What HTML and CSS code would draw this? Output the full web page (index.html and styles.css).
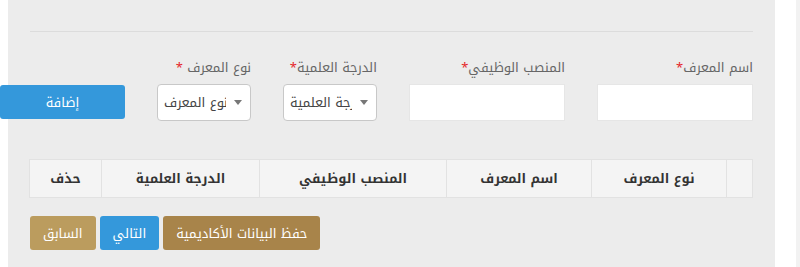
FILE: index.html
```html
<!DOCTYPE html>
<html lang="ar">
<head>
  <meta charset="UTF-8" />
  <meta name="viewport" content="width=device-width, initial-scale=1.0" />
  <title>البيانات الأكاديمية</title>
  <link rel="stylesheet" href="styles.css">
</head>
<body>
  <div class="panel" dir="rtl">
    <hr class="divider">

    <div class="fields">
      <div class="field">
        <label>اسم المعرف<span class="req">*</span></label>
        <input type="text" class="text-input">
      </div>
      <div class="field">
        <label>المنصب الوظيفي<span class="req">*</span></label>
        <input type="text" class="text-input">
      </div>
      <div class="field">
        <label>الدرجة العلمية<span class="req">*</span></label>
        <div class="select"><span class="caret"></span><span class="select-text">الدرجة العلمية</span></div>
      </div>
      <div class="field">
        <label>نوع المعرف <span class="req">*</span></label>
        <div class="select"><span class="caret"></span><span class="select-text">نوع المعرف</span></div>
      </div>
      <div class="field field-btn">
        <button class="btn btn-add">إضافة</button>
      </div>
    </div>

    <table class="refs">
      <thead>
        <tr>
          <th class="c-empty"></th>
          <th class="c-type">نوع المعرف</th>
          <th class="c-name">اسم المعرف</th>
          <th class="c-job">المنصب الوظيفي</th>
          <th class="c-degree">الدرجة العلمية</th>
          <th class="c-del">حذف</th>
        </tr>
      </thead>
    </table>

    <div class="actions">
      <button class="btn btn-save">حفظ البيانات الأكاديمية</button>
      <button class="btn btn-next">التالي</button>
      <button class="btn btn-prev">السابق</button>
    </div>
  </div>
  <div class="side-strip"></div>
</body>
</html>
```

FILE: styles.css
```css
* {
  box-sizing: border-box;
}
body {
  margin: 0;
  font-family: "Noto Kufi Arabic", "Noto Sans Arabic", "DejaVu Sans", sans-serif;
  background: #fff;
  color: #333;
  display: flex;
  min-height: 100vh;
}
.panel {
  width: 767px;
  margin-left: 8px;
  background: #ececec;
  padding: 31px 22px 20px;
}
.side-strip {
  width: 4px;
  margin-left: auto;
  background: #f2f2f2;
}
.divider {
  border: 0;
  border-top: 1px solid #dcdcdc;
  margin: 0 0 26px;
}
.fields {
  display: grid;
  grid-template-columns: 156px 156px 94px 94px 125px;
  column-gap: 32px;
  align-items: end;
}
.field label {
  display: block;
  font-size: 13px;
  line-height: 20px;
  color: #666;
  margin-bottom: 6px;
  white-space: nowrap;
}
.req {
  color: #e5262a;
}
.text-input {
  display: block;
  width: 100%;
  height: 37px;
  border: 1px solid #e6e6e6;
  background: #fff;
  margin: 0;
}
.select {
  display: flex;
  align-items: center;
  height: 37px;
  background: #fff;
  border: 1px solid #c8c8c8;
  border-radius: 4px;
  padding: 0 8px 0 6px;
  font-size: 13px;
  color: #444;
}
.caret {
  flex: none;
  width: 0;
  height: 0;
  border-left: 4px solid transparent;
  border-right: 4px solid transparent;
  border-top: 5px solid #777;
  margin-left: 8px;
}
.select-text {
  flex: 1;
  min-width: 0;
  direction: ltr;
  text-align: left;
  overflow: hidden;
  white-space: nowrap;
}
.btn {
  font-family: inherit;
  font-size: 13px;
  color: #fff;
  border: 0;
  border-radius: 3px;
  height: 34px;
  padding: 0 13px;
  cursor: pointer;
}
.btn-add {
  width: 100%;
  background: #3498db;
  margin-bottom: 2px;
}
.refs {
  width: 100%;
  margin-top: 38px;
  border-collapse: collapse;
  table-layout: fixed;
  background: #f4f4f4;
}
.refs th {
  height: 38px;
  border: 1px solid #e2e2e2;
  font-size: 13px;
  font-weight: bold;
  color: #333;
  text-align: center;
}
.c-empty { width: 26px; }
.c-type { width: 135px; }
.c-name { width: 145px; }
.c-job { width: 187px; }
.c-degree { width: 158px; }
.c-del { width: 72px; }
.actions {
  display: flex;
  justify-content: flex-end;
  gap: 4px;
  margin-top: 18px;
}
.btn-save {
  background: #a8844a;
}
.btn-next {
  background: #3498db;
}
.btn-prev {
  background: #bb9c5e;
}
```
